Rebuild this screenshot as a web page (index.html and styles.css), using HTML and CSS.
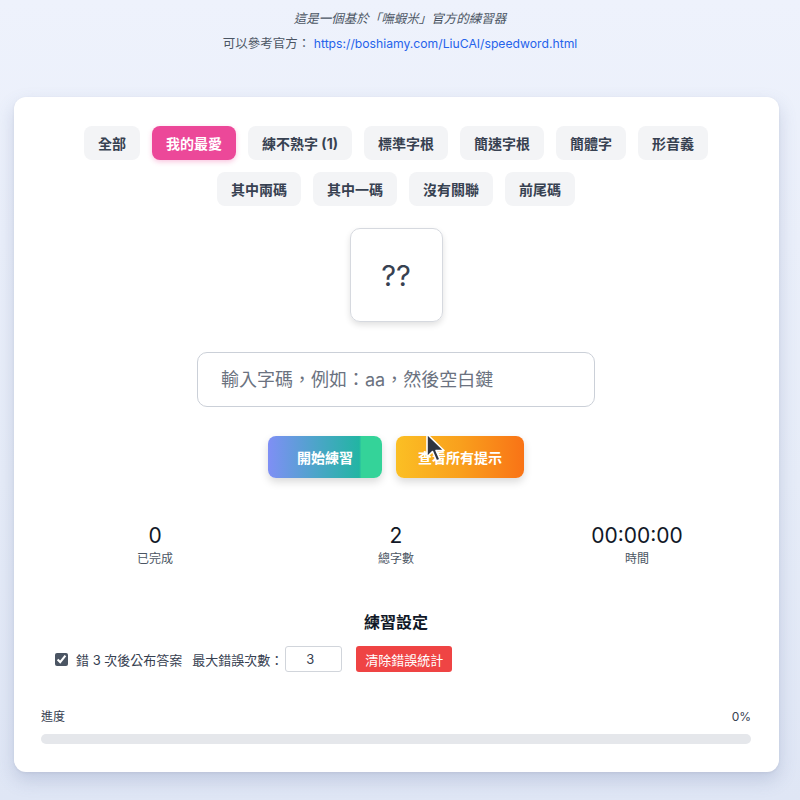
FILE: index.html
```html
<!DOCTYPE html>
<html lang="zh-Hant">
<head>
<meta charset="utf-8">
<title>嘸蝦米練習器</title>
<link rel="stylesheet" href="styles.css">
</head>
<body>
<header class="intro">
  <p class="intro-line intro-italic">這是一個基於「嘸蝦米」官方的練習器</p>
  <p class="intro-line">可以參考官方： <a class="intro-link" href="#">https://boshiamy.com/LiuCAI/speedword.html</a></p>
</header>
<main class="card">
  <nav class="tabs">
    <button class="tab">全部</button>
    <button class="tab tab-active">我的最愛</button>
    <button class="tab">練不熟字 (1)</button>
    <button class="tab">標準字根</button>
    <button class="tab">簡速字根</button>
    <button class="tab">簡體字</button>
    <button class="tab">形音義</button>
    <button class="tab">其中兩碼</button>
    <button class="tab">其中一碼</button>
    <button class="tab">沒有關聯</button>
    <button class="tab">前尾碼</button>
  </nav>
  <div class="char-box">??</div>
  <div class="input-row">
    <input class="code-input" type="text" placeholder="輸入字碼，例如：aa，然後空白鍵">
  </div>
  <div class="actions">
    <button class="action action-start">開始練習</button>
    <button class="action action-hint">查看所有提示</button>
    <svg class="cursor" width="22" height="32" viewBox="0 0 22 32">
      <path d="M2 2 L2 25 L7.5 19.5 L11.5 29 L15 27.5 L11 18.5 L19 18.5 Z" fill="#2f3440" stroke="#ffffff" stroke-width="1.6" stroke-linejoin="round"/>
    </svg>
  </div>
  <section class="stats">
    <div class="stat"><div class="stat-num">0</div><div class="stat-label">已完成</div></div>
    <div class="stat"><div class="stat-num">2</div><div class="stat-label">總字數</div></div>
    <div class="stat"><div class="stat-num">00:00:00</div><div class="stat-label">時間</div></div>
  </section>
  <section class="settings">
    <h2 class="settings-title">練習設定</h2>
    <div class="settings-row">
      <label class="check-label"><input class="check" type="checkbox" checked> 錯 3 次後公布答案</label>
      <span class="max-label">最大錯誤次數：</span>
      <input class="max-input" type="text" value="3">
      <button class="clear-btn">清除錯誤統計</button>
    </div>
  </section>
  <section class="progress">
    <div class="progress-head"><span>進度</span><span>0%</span></div>
    <div class="progress-bar"></div>
  </section>
</main>
</body>
</html>
```

FILE: styles.css
```css
* { box-sizing: border-box; }

html, body {
  margin: 0;
  padding: 0;
}

body {
  min-height: 800px;
  background: linear-gradient(180deg, #eef2fc 0%, #e6ecf8 60%, #dfe6f5 100%);
  font-family: "Inter", "Noto Sans CJK TC", sans-serif;
  color: #374151;
}

.intro {
  padding-top: 6px;
  text-align: center;
}

.intro-line {
  margin: 0;
  font-size: 12.5px;
  line-height: 25px;
  color: #4b5563;
}

.intro-italic { font-style: italic; }

.intro-link {
  color: #2563eb;
  text-decoration: none;
  font-size: 12.2px;
}

.card {
  margin: 41px 21px 0 14px;
  background: #ffffff;
  border-radius: 12px;
  box-shadow: 0 8px 18px rgba(80, 100, 150, 0.22), 0 1px 3px rgba(0,0,0,0.06);
  padding: 29px 28px 28px 27px;
}

.tabs {
  display: flex;
  flex-wrap: wrap;
  justify-content: center;
  gap: 12px;
  padding: 0 2px;
}

.tab {
  height: 34px;
  padding: 0 14px;
  border: none;
  border-radius: 8px;
  background: #f3f4f6;
  color: #374151;
  font-family: "Inter", "Noto Sans CJK TC", sans-serif;
  font-size: 14px;
  font-weight: 700;
}

.tab-active {
  background: #ec4899;
  color: #ffffff;
  box-shadow: 0 2px 5px rgba(236, 72, 153, 0.3);
}

.char-box {
  width: 93px;
  height: 94px;
  margin: 22px auto 0;
  border: 1px solid #d6d9df;
  border-radius: 10px;
  box-shadow: 0 3px 6px rgba(0, 0, 0, 0.12);
  display: flex;
  align-items: center;
  justify-content: center;
  font-size: 29px;
  color: #374151;
}

.input-row {
  display: flex;
  justify-content: center;
  margin-top: 30px;
}

.code-input {
  width: 398px;
  height: 55px;
  border: 1px solid #cbd0d8;
  border-radius: 10px;
  padding: 0 23px;
  font-family: "Inter", "Noto Sans CJK TC", sans-serif;
  font-size: 18px;
  color: #374151;
  outline: none;
}

.code-input::placeholder { color: #6b7280; }

.actions {
  position: relative;
  display: flex;
  justify-content: center;
  gap: 14px;
  margin-top: 29px;
}

.action {
  height: 42px;
  border: none;
  border-radius: 8px;
  color: #ffffff;
  font-family: "Inter", "Noto Sans CJK TC", sans-serif;
  font-size: 14px;
  font-weight: 700;
  box-shadow: 0 4px 8px rgba(0, 0, 0, 0.15);
}

.action-start {
  width: 114px;
  background: linear-gradient(90deg, #7f8ff5 0%, #49a6c6 45%, #22b5a3 80%, #34d399 82%, #34d399 100%);
}

.action-hint {
  width: 128px;
  background: linear-gradient(90deg, #fbbf24 0%, #f9a01d 50%, #f97316 100%);
}

.cursor {
  position: absolute;
  left: 384px;
  top: -4px;
}

.stats {
  display: grid;
  grid-template-columns: repeat(3, 241px);
  justify-content: center;
  margin-top: 44px;
  text-align: center;
}

.stat-num {
  font-size: 21px;
  line-height: 28px;
  color: #111827;
}

.stat-label {
  font-size: 12px;
  line-height: 18px;
  color: #4b5563;
}

.settings {
  margin-top: 43px;
}

.settings-title {
  margin: 0;
  text-align: center;
  font-size: 16px;
  line-height: 22px;
  font-weight: 700;
  color: #111827;
}

.settings-row {
  display: flex;
  align-items: center;
  margin: 13px 0 0 14px;
  font-size: 13px;
  color: #374151;
}

.check-label {
  display: flex;
  align-items: center;
  gap: 8px;
}

.check {
  width: 13px;
  height: 13px;
  margin: 0;
  accent-color: #4b5563;
}

.max-label { margin-left: 10px; }

.max-input {
  width: 57px;
  height: 26px;
  margin-left: 2px;
  border: 1px solid #d1d5db;
  border-radius: 3px;
  padding: 0 0 0 20px;
  font-family: "Inter", "Noto Sans CJK TC", sans-serif;
  font-size: 13px;
  color: #374151;
}

.clear-btn {
  height: 26px;
  margin-left: 14px;
  padding: 0 9px;
  border: none;
  border-radius: 3px;
  background: #ef4444;
  color: #ffffff;
  font-family: "Inter", "Noto Sans CJK TC", sans-serif;
  font-size: 13px;
}

.progress {
  margin-top: 36px;
}

.progress-head {
  display: flex;
  justify-content: space-between;
  font-size: 12px;
  line-height: 18px;
  color: #374151;
}

.progress-bar {
  height: 10px;
  margin-top: 8px;
  border-radius: 5px;
  background: #e5e7eb;
}
```
